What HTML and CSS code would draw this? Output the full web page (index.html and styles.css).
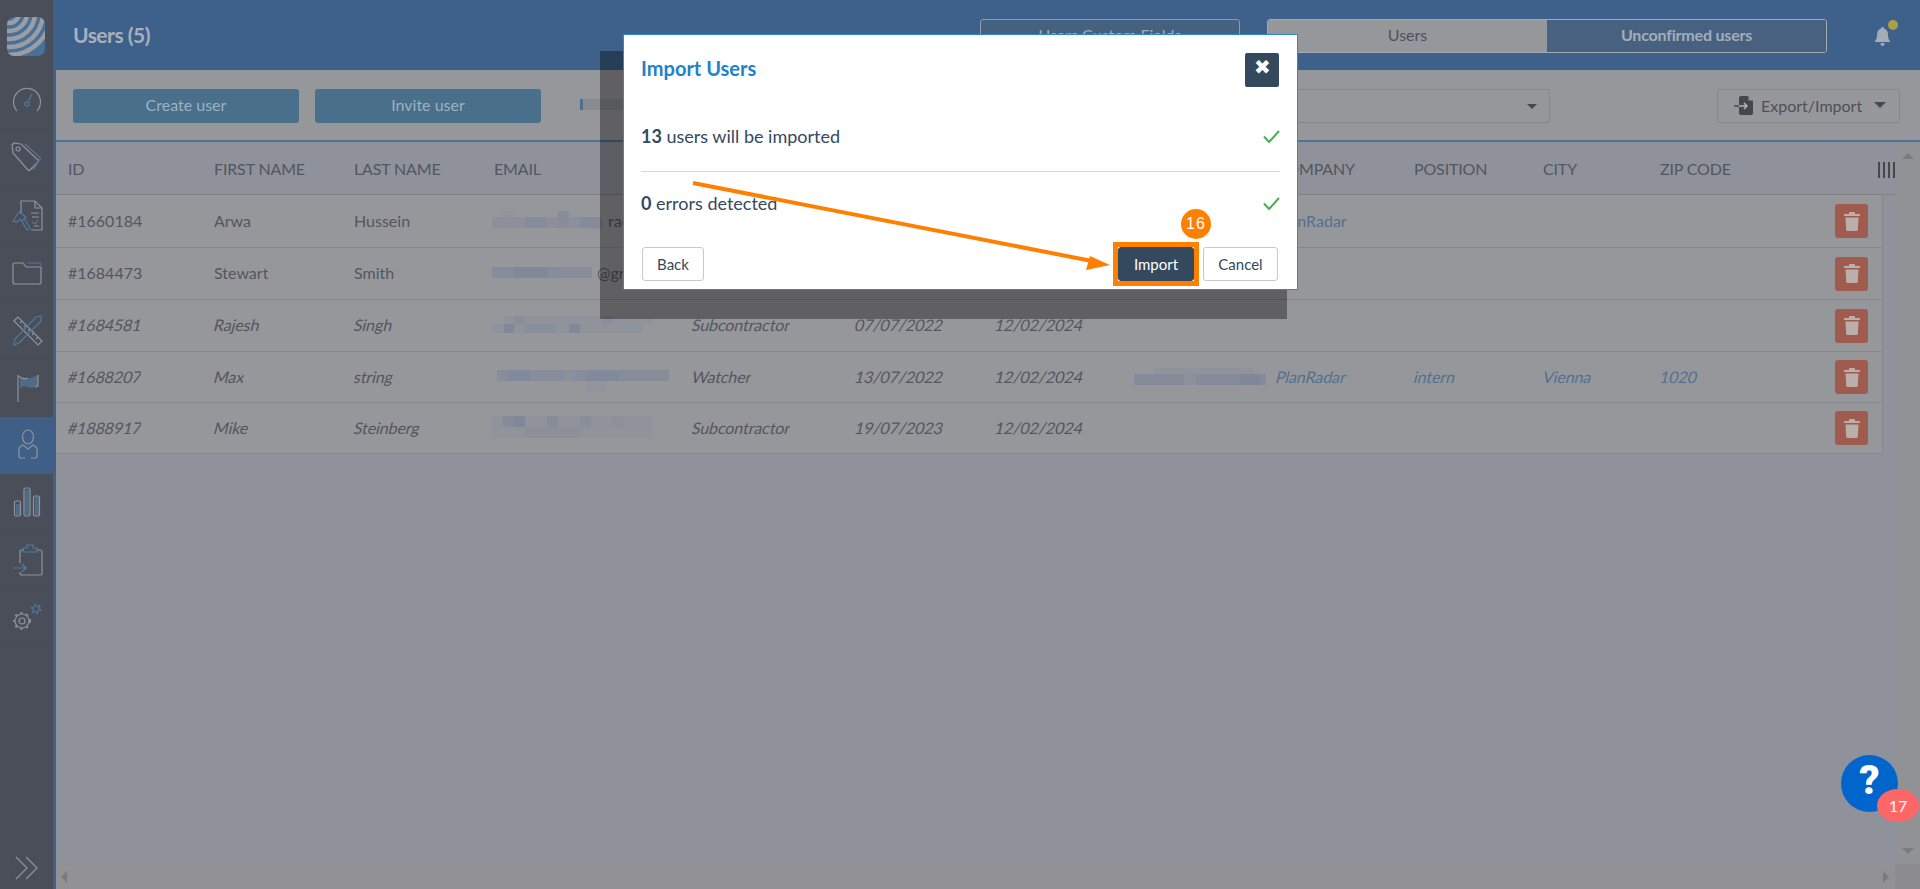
FILE: index.html
```html
<!DOCTYPE html>
<html lang="en">
<head>
    <meta charset="UTF-8">
    <meta name="viewport" content="width=device-width, initial-scale=1.0">
    <title>Users</title>
    <link rel="stylesheet" href="styles.css">
</head>
<body>
    <aside class="sidebar">
        <div class="logo">
            <svg width="38" height="39" viewBox="0 0 38 39">
                <rect width="38" height="39" fill="#48719a"/>
                <g class="logo-rings">
                    <circle cx="2" cy="-4" r="10"/>
                    <circle cx="2" cy="-4" r="18"/>
                    <circle cx="2" cy="-4" r="26"/>
                    <circle cx="2" cy="-4" r="34"/>
                    <circle cx="2" cy="-4" r="42"/>
                </g>
            </svg>
        </div>
        <nav class="side-nav">
            <a class="side-item">
                <svg class="side-icon" viewBox="0 0 34 34">
                    <path class="ln" d="M7 27 A13.500 13.500 0 1 1 27 27"/>
                    <path class="ac" d="M18.500 17 L22 10"/>
                    <circle class="ac" cx="17" cy="20" r="2.200"/>
                </svg>
            </a>
            <a class="side-item">
                <svg class="side-icon" viewBox="0 0 34 34">
                    <path class="ln" d="M2 4 L4 2 L11 3 L28 19 Q29 20 28 21 L20 29 Q19 30 18 29 L3 12 Z"/>
                    <circle class="ln" cx="8" cy="8" r="2"/>
                    <path class="ac" d="M15 3 L30.500 17 L23 29"/>
                </svg>
            </a>
            <a class="side-item">
                <svg class="side-icon" viewBox="0 0 34 34">
                    <path class="ln" d="M11 14 V2 H25 L32 9 V31 H21"/>
                    <path class="ln" d="M25 2 V9 H32 M21 14 H29 M22 18 H29 M24 27 H29"/>
                    <path class="ac" d="M22 23 L25 25 L28 21"/>
                    <path class="ac" d="M3 22 L9 13 L16 18 L12 22 L10 20 L7 23 Z M11 21 L17 31 L20 29 L14 19"/>
                </svg>
            </a>
            <a class="side-item">
                <svg class="side-icon" viewBox="0 0 34 34">
                    <path class="ln" d="M3 9 Q3 7 5 7 H13 L16 11 H31 V26 Q31 28 29 28 H5 Q3 28 3 26 Z"/>
                    <path class="ac" d="M17 7 H29 Q31 7 31 9"/>
                </svg>
            </a>
            <a class="side-item">
                <svg class="side-icon" viewBox="0 0 34 34">
                    <path class="ln" d="M4 8 L8 4 L32 28 L28 32 Z M10 10 L12 8 M14 14 L16 12 M18 18 L20 16 M22 22 L24 20 M26 26 L28 24"/>
                    <path class="ac" d="M26 4 L31 3 L31 8 L9 30 L4 32 L5 26 Z"/>
                </svg>
            </a>
            <a class="side-item">
                <svg class="side-icon" viewBox="0 0 34 34">
                    <path class="ln" d="M8 4 V31"/>
                    <path class="hatch" d="M10 6 Q15 9 20 7 T28 4 V15 Q22 18 17 16 T10 18 Z"/>
                    <path class="ln" d="M8 5 Q14 9 18 7 M28 4 V15 L25 16"/>
                </svg>
            </a>
            <a class="side-item side-item-active">
                <svg class="side-icon" viewBox="0 0 34 34">
                    <ellipse class="ln" cx="17" cy="9" rx="5.500" ry="7"/>
                    <path class="ln" d="M12 17 L17 21 L22 17 L25 19 Q26 20 26 21 V28 Q26 30 24 30 H20 M14 30 H10 Q8 30 8 28 V21 Q8 20 9 19 L12 17"/>
                </svg>
            </a>
            <a class="side-item">
                <svg class="side-icon" viewBox="0 0 34 34">
                    <rect class="hatch" x="6" y="19" width="4" height="11"/>
                    <rect class="hatch" x="15" y="5" width="4" height="25"/>
                    <rect class="hatch" x="25" y="12" width="4" height="18"/>
                    <rect class="ln" x="4.500" y="16" width="6" height="15" rx="1.500"/>
                    <rect class="ln" x="14" y="3" width="6" height="28" rx="1.500"/>
                    <rect class="ln" x="23.500" y="11" width="6" height="20" rx="1.500"/>
                </svg>
            </a>
            <a class="side-item">
                <svg class="side-icon" viewBox="0 0 34 34">
                    <path class="ln" d="M10 20 V8 Q10 7 11 7 H14 M26 7 H30 Q32 7 32 9 V31 Q32 32 30 32 H12 Q10 32 10 30 V29"/>
                    <path class="ac" d="M13 9 V5 H17 V2 H23 V5 H27 V9 Z"/>
                    <path class="ac" d="M3 25 H16 M12 21 L16 25 L12 29"/>
                </svg>
            </a>
            <a class="side-item">
                <svg class="side-icon side-icon-gears" viewBox="0 0 36 34">
                    <circle class="ln" cx="11" cy="21" r="3"/>
                    <circle class="ln" cx="11" cy="21" r="7"/>
                    <circle class="teeth" cx="11" cy="21" r="8"/>
                    <circle class="ac" cx="25" cy="9" r="3"/>
                    <circle class="teeth-ac" cx="25" cy="9" r="4.500"/>
                </svg>
            </a>
        </nav>
        <div class="side-expand">
            <svg width="24" height="24" viewBox="0 0 24 24">
                <path class="ln" d="M1 1 L12 12 L1 23 M11 1 L22 12 L11 23"/>
            </svg>
        </div>
    </aside>

    <div class="main">
        <header class="topbar">
            <h1 class="page-title">Users (5)</h1>
            <div class="top-actions">
                <a class="custom-fields">Users Custom Fields</a>
                <div class="tabs">
                    <a class="tab tab-on">Users</a>
                    <a class="tab tab-off">Unconfirmed users</a>
                </div>
                <div class="bell">
                    <svg width="15" height="19" viewBox="0 0 15 19">
                        <path d="M7.500 0 C8.500 0 9 .6 9 1.500 C12 2.300 13 5 13 8 C13 11 13.600 12.600 15 14 V15 H0 V14 C1.400 12.600 2 11 2 8 C2 5 3 2.300 6 1.500 C6 .6 6.500 0 7.500 0 Z M5.500 16 H9.500 C9.500 18 8.500 19 7.500 19 C6.500 19 5.500 18 5.500 16 Z"/>
                    </svg>
                    <span class="bell-dot"></span>
                </div>
            </div>
        </header>

        <div class="toolbar">
            <a class="btn-primary">Create user</a>
            <a class="btn-primary">Invite user</a>
            <div class="progress"></div>
            <div class="select"><span class="caret"></span></div>
            <a class="btn-export">
                <svg width="20" height="19" viewBox="0 0 20 19">
                    <path fill="#45474d" d="M5 2 Q5 0 7 0 H14 L19 5 V17 Q19 19 17 19 H7 Q5 19 5 17 Z"/>
                    <path fill="#96979b" d="M14.500 0 L19 4.500 H14.500 Z"/>
                    <path fill="none" stroke="#45474d" stroke-width="1.500" d="M0 10 H5"/>
                    <path fill="none" stroke="#b4b5b8" stroke-width="1.500" d="M5 10 H13 M10 7 L13 10 L10 13"/>
                </svg>
                Export/Import
                <span class="caret caret-big"></span>
            </a>
        </div>

        <div class="content">
            <div class="table">
                <div class="row row-head">
                    <div>ID</div>
                    <div>First name</div>
                    <div>Last name</div>
                    <div>Email</div>
                    <div>Role</div>
                    <div>Created</div>
                    <div>Updated</div>
                    <div>Phone</div>
                    <div>Company</div>
                    <div>Position</div>
                    <div>City</div>
                    <div>Zip code</div>
                    <div class="col-toggle"><i></i><i></i><i></i><i></i></div>
                </div>

                <div class="row">
                    <div><span>#1660184</span></div>
                    <div><span>Arwa</span></div>
                    <div><span>Hussein</span></div>
                    <div class="email">
                        <svg class="blur blur-first" width="110" height="19" viewBox="0 0 110 19">
                            <rect x="0" y="6" width="110" height="11" fill="#8b909c"/>
                            <rect x="11" y="0" width="10" height="6" fill="#92949b"/>
                            <rect x="33" y="6" width="22" height="11" fill="#858c9b"/>
                            <rect x="66" y="0" width="11" height="17" fill="#878d9a"/>
                            <rect x="88" y="6" width="22" height="11" fill="#848b99"/>
                            <rect x="99" y="17" width="11" height="2" fill="#8f929a"/>
                        </svg>
                        <span>rad</span>
                    </div>
                    <div><span>Admin</span></div>
                    <div><span>01/06/2022</span></div>
                    <div><span>12/02/2024</span></div>
                    <div></div>
                    <div><a class="link">PlanRadar</a></div>
                    <div></div>
                    <div></div>
                    <div></div>
                    <div class="cell-del"><a class="del"><svg class="trash" viewBox="0 0 16 19"><use href="#trash"/></svg></a></div>
                </div>

                <div class="row">
                    <div><span>#1684473</span></div>
                    <div><span>Stewart</span></div>
                    <div><span>Smith</span></div>
                    <div class="email">
                        <svg class="blur" width="100" height="11" viewBox="0 0 100 11">
                            <rect width="100" height="11" fill="#858c9b"/>
                            <rect x="22" width="33" height="11" fill="#818999"/>
                            <rect x="66" width="34" height="11" fill="#878d9a"/>
                        </svg>
                        <span class="email-end">@gr</span>
                    </div>
                    <div><span>Admin</span></div>
                    <div><span>06/07/2022</span></div>
                    <div><span>12/02/2024</span></div>
                    <div></div>
                    <div></div>
                    <div></div>
                    <div></div>
                    <div></div>
                    <div class="cell-del"><a class="del"><svg class="trash" viewBox="0 0 16 19"><use href="#trash"/></svg></a></div>
                </div>

                <div class="row row-off">
                    <div><span><em>#1684581</em></span></div>
                    <div><span><em>Rajesh</em></span></div>
                    <div><span><em>Singh</em></span></div>
                    <div class="email">
                        <svg class="blur" width="162" height="17" viewBox="0 0 162 17">
                            <rect x="0" y="8" width="150" height="9" fill="#8f939b"/>
                            <rect x="12" y="0" width="150" height="8" fill="#90939a"/>
                            <rect x="12" y="8" width="10" height="9" fill="#7f8998"/>
                            <rect x="22" y="0" width="11" height="8" fill="#8a8e99"/>
                            <rect x="33" y="8" width="30" height="9" fill="#898e9a"/>
                            <rect x="77" y="8" width="11" height="9" fill="#7f8999"/>
                            <rect x="110" y="0" width="11" height="8" fill="#8a8e98"/>
                        </svg>
                    </div>
                    <div><span><em>Subcontractor</em></span></div>
                    <div><span><em>07/07/2022</em></span></div>
                    <div><span><em>12/02/2024</em></span></div>
                    <div></div>
                    <div></div>
                    <div></div>
                    <div></div>
                    <div></div>
                    <div class="cell-del"><a class="del"><svg class="trash" viewBox="0 0 16 19"><use href="#trash"/></svg></a></div>
                </div>

                <div class="row row-off">
                    <div><span><em>#1688207</em></span></div>
                    <div><span><em>Max</em></span></div>
                    <div><span><em>string</em></span></div>
                    <div class="email">
                        <svg class="blur blur-mid" width="172" height="22" viewBox="0 0 172 22">
                            <rect x="0" y="0" width="172" height="11" fill="#878d9a"/>
                            <rect x="11" y="0" width="22" height="11" fill="#818a9a"/>
                            <rect x="66" y="0" width="11" height="11" fill="#8c909a"/>
                            <rect x="88" y="0" width="33" height="11" fill="#808a9a"/>
                            <rect x="121" y="0" width="51" height="11" fill="#868c98"/>
                            <rect x="88" y="11" width="22" height="11" fill="#92949b"/>
                        </svg>
                    </div>
                    <div><span><em>Watcher</em></span></div>
                    <div><span><em>13/07/2022</em></span></div>
                    <div><span><em>12/02/2024</em></span></div>
                    <div class="email">
                        <svg class="blur blur-side" width="132" height="17" viewBox="0 0 132 17">
                            <rect y="6" width="132" height="11" fill="#858b99"/>
                            <rect x="20" width="100" height="6" fill="#90939b"/>
                            <rect x="50" y="6" width="12" height="11" fill="#8c909a"/>
                            <rect x="106" y="6" width="20" height="11" fill="#7e8898"/>
                        </svg>
                    </div>
                    <div><a class="link">PlanRadar</a></div>
                    <div><a class="link">intern</a></div>
                    <div><a class="link">Vienna</a></div>
                    <div><a class="link">1020</a></div>
                    <div class="cell-del"><a class="del"><svg class="trash" viewBox="0 0 16 19"><use href="#trash"/></svg></a></div>
                </div>

                <div class="row row-off">
                    <div><span><em>#1888917</em></span></div>
                    <div><span><em>Mike</em></span></div>
                    <div><span><em>Steinberg</em></span></div>
                    <div class="email">
                        <svg class="blur" width="160" height="22" viewBox="0 0 160 22">
                            <rect width="160" height="22" fill="#909399"/>
                            <rect x="11" y="0" width="22" height="11" fill="#858c99"/>
                            <rect x="22" y="0" width="11" height="11" fill="#7f8999"/>
                            <rect x="55" y="0" width="11" height="11" fill="#868c99"/>
                            <rect x="88" y="0" width="11" height="11" fill="#888e9a"/>
                            <rect x="121" y="0" width="11" height="11" fill="#8d909a"/>
                            <rect x="33" y="11" width="55" height="11" fill="#8d9099"/>
                        </svg>
                    </div>
                    <div><span><em>Subcontractor</em></span></div>
                    <div><span><em>19/07/2023</em></span></div>
                    <div><span><em>12/02/2024</em></span></div>
                    <div></div>
                    <div></div>
                    <div></div>
                    <div></div>
                    <div></div>
                    <div class="cell-del"><a class="del"><svg class="trash" viewBox="0 0 16 19"><use href="#trash"/></svg></a></div>
                </div>
            </div>
            <div class="vscroll">
                <span class="arrow arrow-up"></span>
                <span class="arrow arrow-down"></span>
            </div>
        </div>

        <div class="hscroll">
            <span class="arrow arrow-left"></span>
            <span class="arrow arrow-right"></span>
            <span class="scroll-corner"></span>
        </div>
    </div>

    <!-- trash glyph shared by the delete buttons -->
    <svg class="sprite" width="0" height="0">
        <symbol id="trash" viewBox="0 0 16 19">
            <path d="M5 1 Q5 0 6 0 H10 Q11 0 11 1 V2 H15 Q16 2 16 3 V4 H0 V3 Q0 2 1 2 H5 Z M1.500 5.500 H14.500 L13.800 17.500 Q13.700 19 12.200 19 H3.800 Q2.300 19 2.200 17.500 Z"/>
        </symbol>
    </svg>

    <div class="ghost-box"></div>

    <div class="modal">
        <div class="modal-head">
            <h2 class="modal-title">Import Users</h2>
            <button class="modal-close">&#10006;</button>
        </div>
        <div class="modal-line modal-line-first">
            <p><b>13</b> users will be imported</p>
            <svg class="check" width="17" height="13" viewBox="0 0 17 13"><path d="M1 6.500 L6 12 L16 1"/></svg>
        </div>
        <div class="modal-line modal-line-second">
            <p><b>0</b> errors detected</p>
            <svg class="check" width="17" height="13" viewBox="0 0 17 13"><path d="M1 6.500 L6 12 L16 1"/></svg>
        </div>
        <div class="modal-foot">
            <button class="btn">Back</button>
            <div class="step-mark"><button class="btn btn-dark">Import</button></div>
            <button class="btn">Cancel</button>
        </div>
    </div>

    <svg class="guide-arrow" width="1920" height="889" viewBox="0 0 1920 889">
        <path d="M693 183 L1092 261" fill="none" stroke="#ff8000" stroke-width="4"/>
        <path d="M1110 265 L1090 256 L1086 270 Z" fill="#ff8000"/>
    </svg>
    <div class="step-badge">16</div>

    <div class="help">
        <span class="help-mark">?</span>
        <span class="help-count">17</span>
    </div>
</body>
</html>
```

FILE: styles.css
```css
* {
    box-sizing: border-box;
}
html, body {
    height: 100%;
}
body {
    display: flex;
    margin: 0;
    overflow: hidden;
    position: relative;
    background-color: #8f929b;
    color: #53565e;
    font-family: Lato, "Liberation Sans", sans-serif;
    font-size: 16px;
}
a {
    text-decoration: none;
}

/* sidebar */
.sidebar {
    display: flex;
    flex-direction: column;
    flex: none;
    width: 56px;
    background-color: #4a4e59;
    border-right: 3px solid #3f618a;
}
.logo {
    height: 73px;
    padding: 17px 0 0 7px;
}
.logo svg {
    display: block;
    border-radius: 7px;
}
.logo-rings circle {
    fill: none;
    stroke: #9a9da4;
    stroke-width: 4.5;
}
.side-nav {
    display: flex;
    flex-direction: column;
}
.side-item {
    display: flex;
    align-items: center;
    justify-content: center;
    height: 57.3px;
    border-bottom: 1px solid #474b55;
}
.side-item-active {
    width: 56px;
    background-color: #3f5f86;
    border-bottom: none;
}
.side-icon {
    width: 34px;
    height: 34px;
}
.side-icon-gears {
    width: 36px;
    margin-left: 5px;
}
.ln, .ac, .hatch {
    fill: none;
    stroke-width: 1.2;
}
.ln {
    stroke: #8f939c;
}
.ac {
    stroke: #4d7aa2;
}
.hatch {
    fill: #506b85;
    stroke: none;
}
.teeth, .teeth-ac {
    fill: none;
    stroke-dasharray: 2 4;
    stroke-width: 2;
    stroke: #8f939c;
}
.teeth-ac {
    stroke: #4d7aa2;
    stroke-width: 1.5;
    stroke-dasharray: 2 2.700;
}
.side-expand {
    display: flex;
    justify-content: center;
    margin-top: auto;
    padding-bottom: 9px;
}

/* right part */
.main {
    display: flex;
    flex-direction: column;
    flex: 1;
    min-width: 0;
}
.topbar {
    display: flex;
    align-items: flex-start;
    justify-content: space-between;
    flex: none;
    height: 70px;
    padding: 19px 22px 0 17px;
    background-color: #3e618b;
}
.page-title {
    margin: 3px 0 0;
    color: #a9b0ba;
    font-size: 21px;
    font-weight: 700;
    letter-spacing: -0.5px;
}
.top-actions {
    display: flex;
    align-items: flex-start;
}
.custom-fields {
    display: flex;
    align-items: center;
    justify-content: center;
    width: 260px;
    height: 34px;
    margin-right: 27px;
    padding-bottom: 3px;
    background-color: #46607f;
    border: 1px solid #8f9bad;
    border-radius: 3px;
    color: #a5acb8;
}
.tabs {
    display: flex;
    width: 560px;
    height: 34px;
    margin-right: 48px;
    border-radius: 3px;
    border: 1px solid #a3a9b3;
    overflow: hidden;
}
.tab {
    display: flex;
    align-items: center;
    justify-content: center;
    padding-bottom: 4px;
}
.tab-on {
    width: 279px;
    background-color: #96979b;
    color: #4d525c;
}
.tab-off {
    flex: 1;
    background-color: #486181;
    color: #a3adb9;
    font-weight: 700;
    letter-spacing: -0.2px;
}
.bell {
    position: relative;
    width: 23px;
    height: 26px;
    padding-top: 8px;
}
.bell svg {
    display: block;
    fill: #a5acb8;
}
.bell-dot {
    position: absolute;
    top: 1px;
    left: 13px;
    width: 10px;
    height: 10px;
    border-radius: 50%;
    background-color: #a8a043;
}

/* toolbar */
.toolbar {
    display: flex;
    align-items: flex-start;
    flex: none;
    height: 72px;
    padding: 19px 20px 0 17px;
    background-color: #96979b;
    border-bottom: 2px solid #4a7597;
}
.btn-primary {
    display: flex;
    align-items: center;
    justify-content: center;
    width: 226px;
    height: 34px;
    margin-right: 16px;
    padding-bottom: 4px;
    background-color: #4a6f8b;
    border-radius: 3px;
    color: #9db2c2;
}
.progress {
    width: 60px;
    height: 11px;
    margin: 10px 0 0 23px;
    background-color: #8a8b90;
    border-left: 3px solid #4a6f96;
}
.select {
    display: flex;
    align-items: center;
    justify-content: flex-end;
    width: 269px;
    height: 34px;
    margin-left: 641px;
    padding-right: 12px;
    border: 1px solid #85868a;
    border-radius: 2px;
}
.caret {
    width: 0;
    height: 0;
    border-left: 5px solid transparent;
    border-right: 5px solid transparent;
    border-top: 5px solid #45474d;
}
.caret-big {
    margin-left: 5px;
    border-left-width: 6px;
    border-right-width: 6px;
    border-top-width: 6px;
}
.btn-export {
    display: flex;
    align-items: center;
    width: 183px;
    height: 34px;
    margin-left: auto;
    padding: 0 0 2px 16px;
    gap: 7px;
    border: 1px solid #85868a;
    border-radius: 2px;
    color: #4d5058;
}

/* table */
.content {
    display: flex;
    flex: 1;
    min-height: 0;
}
.table {
    flex: 1;
    min-width: 0;
}
.row {
    display: grid;
    grid-template-columns: 146px 140px 140px 198px 163px 140px 139px 142px 138px 129px 117px 1fr 50px;
    align-items: center;
    height: 52px;
    margin-right: 12px;
    padding: 0 0 2px 12px;
    background-color: #96979b;
    border-bottom: 1px solid #85878d;
    border-right: 1px solid #85878d;
}
.row-head + .row {
    height: 53px;
}
.row:nth-child(n+5) {
    height: 51px;
}
.row > div > span {
    display: inline-block;
    vertical-align: top;
    overflow: hidden;
}
/* slanted text, cut off where it leaves its box */
.row-off em,
.row-off .link {
    display: inline-block;
    font-style: normal;
    letter-spacing: -0.1px;
    transform: skewX(-14deg);
    transform-origin: 0 60%;
}
.row-head {
    grid-template-columns: 146px 140px 140px 198px 163px 140px 139px 142px 138px 129px 117px 1fr 16px;
    height: 53px;
    margin-right: 0;
    padding-bottom: 0;
    background-color: transparent;
    border-right: none;
    border-bottom-color: #7e8084;
    text-transform: uppercase;
    letter-spacing: -0.15px;
}
.col-toggle {
    display: flex;
    justify-content: space-between;
    height: 16px;
    margin: 4px 0 0 -1px;
}
.col-toggle i {
    width: 2px;
    background-color: #45474d;
}
.email {
    display: flex;
    align-items: center;
}
.blur {
    flex: none;
    margin-left: -2px;
    margin-right: 4px;
}
.blur-first {
    margin-right: 6px;
}
.blur-mid {
    margin: 9px 0 0 3px;
}
.blur-side {
    margin-left: 0;
}
.email-end {
    margin-left: 1px;
}
.link {
    color: #52718f;
}
.cell-del {
    display: flex;
    justify-content: flex-end;
    margin-top: 2px;
    padding-right: 14px;
}
.del {
    display: flex;
    align-items: center;
    justify-content: center;
    width: 33px;
    height: 34px;
    background-color: #9f5c4e;
    border-radius: 3px;
}
.trash {
    width: 16px;
    height: 19px;
    fill: #bcaeaa;
}
.sprite {
    position: absolute;
}

/* scrollbars */
.vscroll {
    display: flex;
    flex-direction: column;
    align-items: center;
    justify-content: space-between;
    flex: none;
    width: 25px;
    padding: 11px 0 10px;
    background-color: #919295;
}
.hscroll {
    display: flex;
    align-items: center;
    flex: none;
    height: 25px;
    padding-left: 5px;
    background-color: #929295;
}
.arrow {
    width: 0;
    height: 0;
    border: 6px solid transparent;
}
.arrow-up {
    border-top: none;
    border-bottom-color: #7a7b7f;
}
.arrow-down {
    border-bottom: none;
    border-top-color: #7a7b7f;
}
.arrow-left {
    border-left: none;
    border-right-color: #7a7b7f;
}
.arrow-right {
    margin-left: auto;
    margin-right: 6px;
    border-right: none;
    border-left-color: #7a7b7f;
}
.scroll-corner {
    width: 25px;
    height: 25px;
    background-color: #8d8d90;
}

/* dialog and what lies over it */
.ghost-box {
    position: absolute;
    left: 600px;
    top: 51px;
    width: 687px;
    height: 268px;
    background: rgba(0, 0, 0, 0.36);
}
.modal {
    position: absolute;
    left: 623px;
    top: 34px;
    width: 675px;
    height: 256px;
    padding: 18px 17px 0;
    background-color: #fff;
    border: 1px solid #2a8bd0;
    color: #34495e;
}
.modal-head {
    display: flex;
    align-items: flex-start;
    justify-content: space-between;
    height: 48px;
    padding-right: 1px;
}
.modal-title {
    margin: 3px 0 0;
    color: #2183c6;
    font-size: 20px;
    font-weight: 700;
}
.modal-close {
    width: 34px;
    height: 34px;
    padding: 0 0 7px;
    background-color: #34495e;
    border: none;
    border-radius: 2px;
    color: #fff;
    font-size: 20px;
}
.modal-line {
    display: flex;
    align-items: center;
    justify-content: space-between;
    font-size: 18px;
}
.modal-line p {
    margin: 0;
}
.modal-line-first {
    height: 71px;
    border-bottom: 1px solid #d8d8d8;
}
.modal-line-second {
    height: 62px;
}
.check {
    fill: none;
    stroke: #4cae4f;
    stroke-width: 2;
}
.modal-foot {
    display: flex;
    gap: 9px;
    margin-top: 13px;
    padding: 0 2px 0 1px;
}
.btn {
    height: 34px;
    width: 62px;
    background-color: #fff;
    border: 1px solid #c9c9c9;
    border-radius: 3px;
    color: #34495e;
    font-family: inherit;
    font-size: 15px;
}
.step-mark {
    display: flex;
    margin: -5px -5px -5px auto;
    border: 5px solid #ff8000;
}
.btn-dark {
    width: 76px;
    background-color: #34495e;
    border-color: #34495e;
    color: #fff;
}
.step-mark + .btn {
    width: 75px;
}
.guide-arrow {
    position: absolute;
    left: 0;
    top: 0;
}
.step-badge {
    position: absolute;
    left: 1181px;
    top: 209px;
    width: 30px;
    height: 30px;
    border-radius: 50%;
    background-color: #ff8000;
    color: #fff;
    font-family: "Liberation Sans", sans-serif;
    font-size: 16px;
    letter-spacing: 1px;
    line-height: 30px;
    text-align: center;
}
.help {
    position: absolute;
    left: 1841px;
    top: 755px;
    width: 57px;
    height: 57px;
    border-radius: 50%;
    background-color: #0066cc;
    color: #fff;
    text-align: center;
}
.help-mark {
    font-family: Roboto, sans-serif;
    font-size: 40px;
    font-weight: 900;
    line-height: 52px;
}
.help-count {
    position: absolute;
    left: 36px;
    top: 34px;
    width: 42px;
    height: 33px;
    border-radius: 50%;
    background-color: #ff6666;
    font-size: 16px;
    line-height: 33px;
}
```
